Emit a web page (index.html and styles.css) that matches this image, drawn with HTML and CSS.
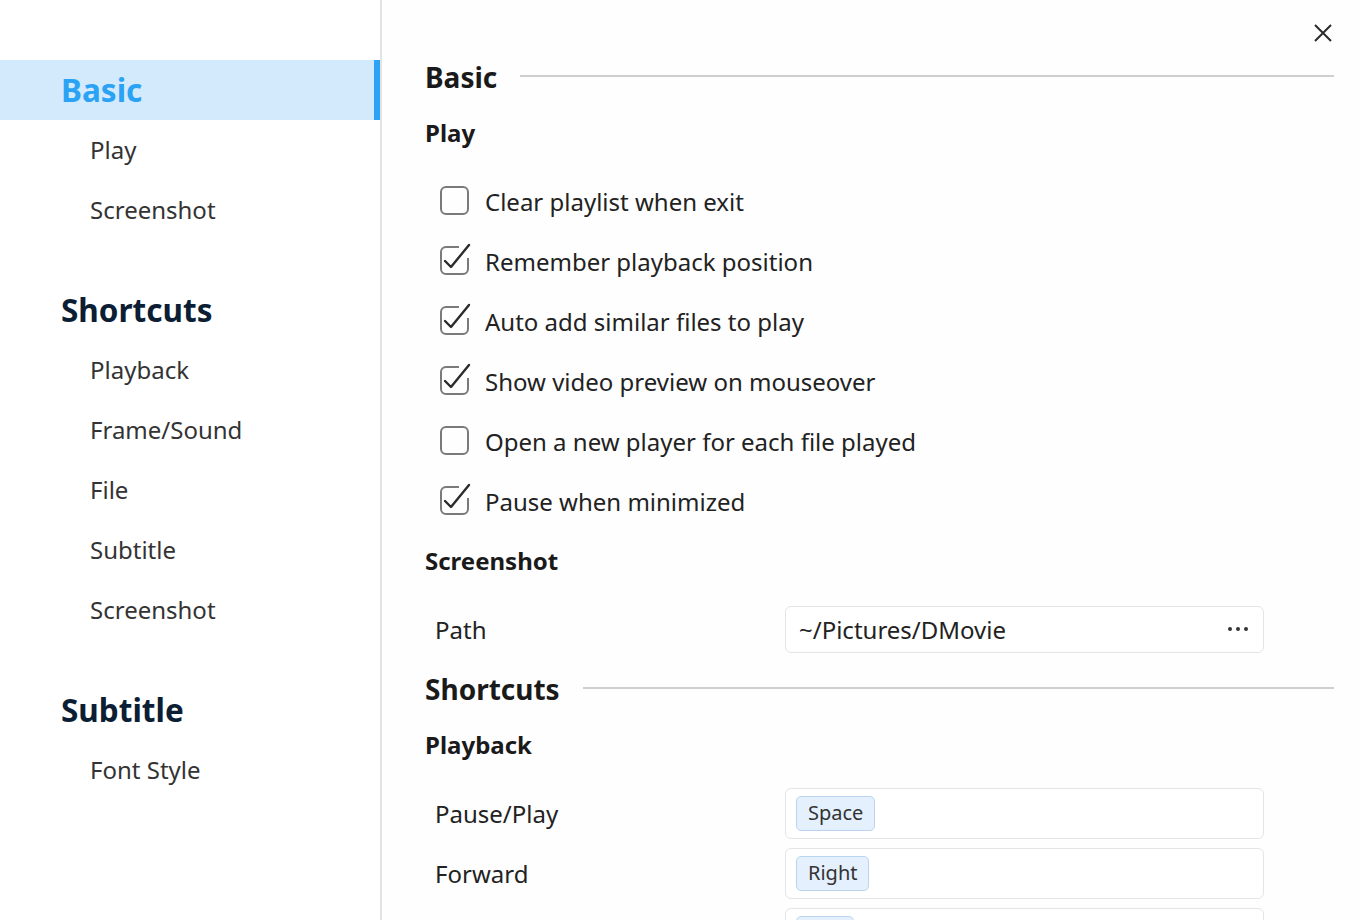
FILE: index.html
```html
<!DOCTYPE html>
<html lang="en">
<head>
<meta charset="utf-8">
<title>Settings</title>
<link rel="stylesheet" href="styles.css">
</head>
<body>
<div class="dialog">
  <nav class="sidebar">
    <div class="nav-head active">Basic</div>
    <div class="nav-item">Play</div>
    <div class="nav-item">Screenshot</div>
    <div class="nav-head spaced">Shortcuts</div>
    <div class="nav-item">Playback</div>
    <div class="nav-item">Frame/Sound</div>
    <div class="nav-item">File</div>
    <div class="nav-item">Subtitle</div>
    <div class="nav-item">Screenshot</div>
    <div class="nav-head spaced">Subtitle</div>
    <div class="nav-item">Font Style</div>
  </nav>
  <main class="content">
    <button class="close" aria-label="Close">
      <svg width="18" height="18" viewBox="0 0 18 18"><path d="M1 1 L17 17 M17 1 L1 17" stroke="#2b2b2b" stroke-width="2" fill="none"/></svg>
    </button>

    <div class="section-title"><span>Basic</span><div class="rule"></div></div>
    <div class="group-title">Play</div>

    <div class="check-row">
      <svg class="cb" width="32" height="32" viewBox="0 0 32 32"><rect x="1" y="4" width="27" height="27" rx="5" fill="none" stroke="#7a7a7a" stroke-width="2"/></svg>
      <span>Clear playlist when exit</span>
    </div>
    <div class="check-row">
      <svg class="cb" width="32" height="32" viewBox="0 0 32 32"><path d="M19 4 H6 A5 5 0 0 0 1 9 V26 A5 5 0 0 0 6 31 H23 A5 5 0 0 0 28 26 V15" fill="none" stroke="#7a7a7a" stroke-width="2"/><path d="M5 18 L11 24 L29 2" fill="none" stroke="#2b2b2b" stroke-width="2.4" stroke-linecap="round" stroke-linejoin="round"/></svg>
      <span>Remember playback position</span>
    </div>
    <div class="check-row">
      <svg class="cb" width="32" height="32" viewBox="0 0 32 32"><path d="M19 4 H6 A5 5 0 0 0 1 9 V26 A5 5 0 0 0 6 31 H23 A5 5 0 0 0 28 26 V15" fill="none" stroke="#7a7a7a" stroke-width="2"/><path d="M5 18 L11 24 L29 2" fill="none" stroke="#2b2b2b" stroke-width="2.4" stroke-linecap="round" stroke-linejoin="round"/></svg>
      <span>Auto add similar files to play</span>
    </div>
    <div class="check-row">
      <svg class="cb" width="32" height="32" viewBox="0 0 32 32"><path d="M19 4 H6 A5 5 0 0 0 1 9 V26 A5 5 0 0 0 6 31 H23 A5 5 0 0 0 28 26 V15" fill="none" stroke="#7a7a7a" stroke-width="2"/><path d="M5 18 L11 24 L29 2" fill="none" stroke="#2b2b2b" stroke-width="2.4" stroke-linecap="round" stroke-linejoin="round"/></svg>
      <span>Show video preview on mouseover</span>
    </div>
    <div class="check-row">
      <svg class="cb" width="32" height="32" viewBox="0 0 32 32"><rect x="1" y="4" width="27" height="27" rx="5" fill="none" stroke="#7a7a7a" stroke-width="2"/></svg>
      <span>Open a new player for each file played</span>
    </div>
    <div class="check-row">
      <svg class="cb" width="32" height="32" viewBox="0 0 32 32"><path d="M19 4 H6 A5 5 0 0 0 1 9 V26 A5 5 0 0 0 6 31 H23 A5 5 0 0 0 28 26 V15" fill="none" stroke="#7a7a7a" stroke-width="2"/><path d="M5 18 L11 24 L29 2" fill="none" stroke="#2b2b2b" stroke-width="2.4" stroke-linecap="round" stroke-linejoin="round"/></svg>
      <span>Pause when minimized</span>
    </div>

    <div class="group-title">Screenshot</div>
    <div class="field-row path-row">
      <div class="label">Path</div>
      <div class="input path-input">
        <span>~/Pictures/DMovie</span>
        <span class="dots"><i></i><i></i><i></i></span>
      </div>
    </div>

    <div class="section-title s2"><span>Shortcuts</span><div class="rule"></div></div>
    <div class="group-title">Playback</div>
    <div class="field-row">
      <div class="label">Pause/Play</div>
      <div class="input key-input"><span class="key">Space</span></div>
    </div>
    <div class="field-row">
      <div class="label">Forward</div>
      <div class="input key-input"><span class="key">Right</span></div>
    </div>
    <div class="field-row">
      <div class="label"></div>
      <div class="input key-input"><span class="key key-empty"></span></div>
    </div>
  </main>
</div>
</body>
</html>
```

FILE: styles.css
```css
* { box-sizing: border-box; }
html, body {
  margin: 0;
  padding: 0;
  width: 1360px;
  height: 920px;
  overflow: hidden;
  background: #ffffff;
  font-family: "Noto Sans", "Open Sans", "DejaVu Sans", sans-serif;
}
.dialog {
  display: flex;
  width: 1360px;
  height: 920px;
}
.sidebar {
  width: 382px;
  flex: none;
  padding-top: 60px;
  border-right: 2px solid #e3e3e3;
  background: #ffffff;
}
.nav-head {
  height: 60px;
  line-height: 60px;
  padding-left: 61px;
  font-size: 31.5px;
  font-weight: 700;
  color: #0c1e34;
}
.nav-head.spaced { margin-top: 40px; }
.nav-head.active {
  background: #d3e9fc;
  color: #2aa3f5;
  border-right: 6px solid #2ea3f5;
}
.nav-item {
  height: 60px;
  line-height: 60px;
  padding-left: 90px;
  font-size: 24px;
  color: #333333;
}
.content {
  position: relative;
  flex: 1;
  padding: 55px 26px 0 43px;
  background: #fefefe;
  color: #1c1c1c;
}
.close {
  position: absolute;
  top: 24px;
  right: 28px;
  width: 18px;
  height: 18px;
  padding: 0;
  border: 0;
  background: none;
  display: flex;
}
.section-title {
  display: flex;
  align-items: center;
  gap: 23px;
  height: 44px;
  font-size: 28px;
  font-weight: 700;
  color: #1a1a1a;
}
.section-title.s2 { margin-top: 8px; }
.section-title .rule {
  flex: 1;
  height: 2px;
  background: #cfcfcf;
  margin-top: -3px;
}
.group-title {
  height: 60px;
  line-height: 60px;
  margin-top: 4px;
  font-size: 24px;
  font-weight: 700;
  color: #1a1a1a;
}
.group-title + .check-row { margin-top: 8px; }
.check-row + .group-title { margin-top: 0; }
.check-row {
  display: flex;
  align-items: center;
  height: 60px;
  padding-left: 15px;
  font-size: 24px;
  color: #222222;
}
.check-row .cb {
  flex: none;
  margin-right: 13px;
  margin-top: -4px;
  overflow: visible;
}
.field-row {
  display: flex;
  align-items: center;
  height: 60px;
  font-size: 24px;
  color: #222222;
}
.group-title + .field-row { margin-top: 8px; }
.field-row .label {
  width: 360px;
  padding-left: 10px;
  flex: none;
}
.input {
  width: 479px;
  border: 1.5px solid #e4e4e4;
  border-radius: 6px;
  background: #ffffff;
  display: flex;
  align-items: center;
}
.path-input {
  height: 47px;
  padding: 0 13px 0 13px;
  justify-content: space-between;
  font-size: 24px;
  color: #222222;
}
.dots {
  display: flex;
  gap: 4px;
  margin-right: 2px;
}
.dots i {
  width: 4px;
  height: 4px;
  border-radius: 50%;
  background: #333333;
}
.key-input {
  height: 51px;
  padding-left: 10px;
}
.key {
  height: 35px;
  line-height: 32px;
  padding: 0 11px;
  background: #e4f0fd;
  border: 1.5px solid #bad4ef;
  border-radius: 5px;
  font-size: 20px;
  color: #333333;
}
.key-empty {
  width: 58px;
}
```
